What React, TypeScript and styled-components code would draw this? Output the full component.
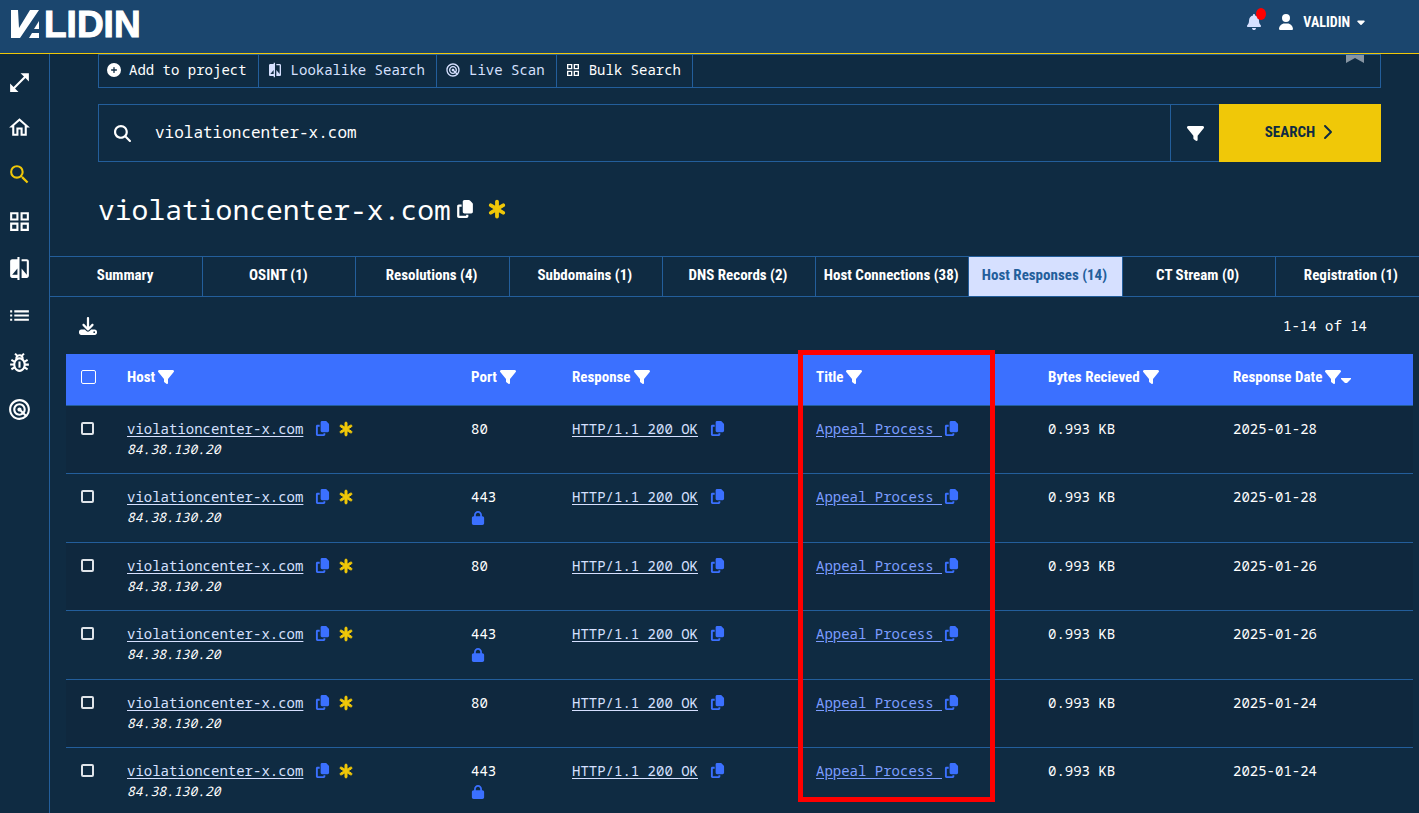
import React from "react";
import styled, { createGlobalStyle, css } from "styled-components";
import {
  MdCompare,
  MdList,
  MdOpenInFull,
  MdOutlineGridView,
  MdOutlineHome,
  MdOutlinePestControl,
  MdRadar,
  MdSearch,
} from "react-icons/md";
import {
  FaAsterisk,
  FaBell,
  FaCaretDown,
  FaChevronRight,
  FaCirclePlus,
  FaCopy,
  FaDownload,
  FaFilter,
  FaLock,
  FaMagnifyingGlass,
  FaUser,
} from "react-icons/fa6";

const color = {
  page: "#0f2b42",
  stripe: "#0f283e",
  header: "#1b466e",
  line: "#235e9b",
  yellow: "#f0c808",
  blue: "#3b70ff",
  pale: "#d6e0ff",
  link: "#7c9dff",
  white: "#ffffff",
};
const mono = `"Noto Sans Mono", "DejaVu Sans Mono", monospace`;
const condensed = `"Roboto Condensed", "Open Sans Condensed", sans-serif`;

const GlobalStyle = createGlobalStyle`
  *, *::before, *::after { box-sizing: border-box; }
  body {
    margin: 0;
    overflow: hidden;
    background: ${color.page};
    color: ${color.white};
    font: 400 14px/21px ${mono};
  }
  svg { display: block; flex: none; }
`;

const Page = styled.div`
  display: flex;
  flex-direction: column;
  height: 100vh;
`;

const TopBar = styled.header`
  display: flex;
  align-items: flex-start;
  justify-content: space-between;
  flex: 0 0 54px;
  padding: 4px 52px 0 11px;
  background: ${color.header};
  border-bottom: 1px solid ${color.yellow};
`;

const LogoLink = styled.a`
  color: ${color.white};
`;

const Account = styled.div`
  display: flex;
  align-items: center;
  height: 36px;
`;

const IconButton = styled.button`
  display: flex;
  align-items: center;
  justify-content: center;
  padding: 0;
  border: 0;
  background: none;
  color: inherit;
  cursor: pointer;
`;

const BellButton = styled(IconButton)`
  position: relative;
  margin-right: 16px;
  color: ${color.pale};
`;

const Alert = styled.span`
  position: absolute;
  top: -6px;
  right: -4px;
  width: 10px;
  height: 12px;
  border-radius: 50%;
  background: #ff0000;
`;

const UserButton = styled(IconButton)`
  gap: 5px;
  font: 700 14px/24px ${condensed};
`;

const UserName = styled.span`
  padding-left: 4px;
`;

const Body = styled.div`
  display: flex;
  flex: 1;
  min-height: 0;
`;

const Sidebar = styled.nav`
  flex: 0 0 50px;
  border-right: 1px solid ${color.line};
`;

const ExpandButton = styled(IconButton)`
  width: 39px;
  height: 50px;
  padding-top: 6px;
`;

const NavLink = styled.a<{ $active?: boolean }>`
  display: flex;
  align-items: center;
  justify-content: center;
  width: 39px;
  height: 47px;
  color: ${(p) => (p.$active ? color.yellow : color.white)};
`;

const Main = styled.main`
  flex: 1;
  min-width: 0;
  overflow: hidden;
`;

const Intro = styled.section`
  display: flex;
  flex-direction: column;
  padding: 0 38px 0 48px;
`;

const Toolbar = styled.div`
  display: flex;
  height: 34px;
  margin-bottom: 16px;
  border: 1px solid ${color.line};
`;

const Tool = styled.button<{ $muted?: boolean }>`
  display: flex;
  align-items: center;
  gap: 8px;
  padding: 0 11px 2px 8px;
  border: 0;
  border-right: 1px solid ${color.line};
  background: none;
  color: ${(p) => (p.$muted ? color.pale : color.white)};
  font: 400 14px/20px ${mono};
  cursor: pointer;
`;

const BookmarkButton = styled(IconButton)`
  align-self: flex-start;
  margin-left: auto;
  margin-right: 16px;
  color: #8795a3;
`;

const SearchForm = styled.form`
  display: flex;
  height: 58px;
`;

const SearchField = styled.label`
  display: flex;
  align-items: center;
  flex: 1;
  gap: 24px;
  padding-left: 15px;
  border: 1px solid ${color.line};
  border-right: 0;
`;

const SearchInput = styled.input`
  flex: 1;
  min-width: 0;
  height: 100%;
  padding: 0 0 2px;
  border: 0;
  outline: 0;
  background: none;
  color: ${color.white};
  font: 400 16px/24px ${mono};
`;

const FilterButton = styled(IconButton)`
  width: 49px;
  border: 1px solid ${color.line};
  border-right: 0;
`;

const SearchButton = styled(IconButton)`
  gap: 4px;
  width: 162px;
  padding-bottom: 3px;
  background: ${color.yellow};
  color: ${color.page};
  font: 700 15px/24px ${condensed};
`;

const Heading = styled.div`
  display: flex;
  align-items: center;
  gap: 13px;
  height: 94px;
`;

const Title = styled.h1`
  display: flex;
  align-items: center;
  gap: 5px;
  margin: 0;
  font: 400 28px/40px ${mono};
`;

const Star = styled(FaAsterisk)`
  color: ${color.yellow};
  stroke: ${color.yellow};
  stroke-width: 32px;
  overflow: visible;
`;

const Tabs = styled.div`
  display: flex;
  height: 41px;
  margin-right: -10px;
  border: solid ${color.line};
  border-width: 1px 0;
`;

const Tab = styled.button<{ $active?: boolean }>`
  flex: 1 1 0;
  min-width: 0;
  padding: 0 2px 3px 0;
  border: 0;
  border-right: 1px solid ${color.line};
  background: ${(p) => (p.$active ? color.pale : "transparent")};
  color: ${(p) => (p.$active ? color.line : color.white)};
  font: 700 15px/20px ${condensed};
  white-space: nowrap;
  cursor: pointer;
`;

const TableBar = styled.div`
  display: flex;
  align-items: center;
  justify-content: space-between;
  height: 57px;
  padding: 0 52px 0 29px;
`;

const TableArea = styled.div`
  padding: 0 6px 0 16px;
`;

const Table = styled.table`
  width: 100%;
  table-layout: fixed;
  border-collapse: separate;
  border-spacing: 0;
`;

const Col = styled.col<{ $width: number }>`
  width: ${(p) => p.$width}px;
`;

const cell = css`
  padding: 0 0 0 18px;
  border-bottom: 1px solid ${color.line};
  text-align: left;
  &:first-child { padding-left: 15px; }
`;

const HeadCell = styled.th`
  ${cell}
  position: relative;
  height: 52px;
  padding-bottom: 5px;
  background: ${color.blue};
  font: 700 15px/20px ${condensed};
`;

const HeadLabel = styled.div`
  display: flex;
  align-items: center;
  gap: 3px;
`;

const Row = styled.tr<{ $secure: boolean }>`
  height: ${(p) => (p.$secure ? 69 : 68)}px;
  &:nth-child(odd) { background: ${color.stripe}; }
`;

const Cell = styled.td`
  ${cell}
  padding-top: 12px;
  vertical-align: top;
`;

const Check = styled.input`
  display: block;
  appearance: none;
  width: 13px;
  height: 13px;
  margin: 4px 0 0;
  border: 2px solid #dfe4e9;
  border-radius: 2px;
`;

const HeadCheck = styled(Check)`
  width: 15px;
  height: 14px;
  margin: 0;
  border-width: 1px;
  border-color: ${color.white};
`;

const Line = styled.div`
  display: flex;
  align-items: center;
  height: 21px;
`;

const CopyButton = styled(IconButton)`
  margin: 0 8px 0 12px;
  color: ${color.blue};
`;

const TextLink = styled.a`
  color: ${color.pale};
  white-space: pre;
  text-underline-offset: 2px;
`;

const TitleLink = styled(TextLink)`
  color: ${color.link};
`;

const TitleCopy = styled(CopyButton)`
  margin: 0 0 0 2px;
`;

const Address = styled.em`
  display: block;
  font-size: 13px;
  line-height: 21px;
`;

const LockMark = styled.span`
  display: block;
  padding-top: 4px;
  color: ${color.blue};
`;

const Highlight = styled.span`
  position: absolute;
  top: -4px;
  left: 0;
  right: 35px;
  height: 452px;
  border: 5px solid #ff0000;
  pointer-events: none;
  z-index: 1;
`;

const LogoText = styled.text`
  font: 700 37px "Liberation Sans", Arial, sans-serif;
  stroke: currentColor;
  stroke-width: 1px;
`;

function Logo() {
  return (
    <svg width="136" height="44" viewBox="0 -6 136 44" fill="currentColor" role="img" aria-label="Validin">
      <path d="M0 0H7L8 18L19 0H28L9 28H0Z" />
      <path d="M28 11V19H23ZM21 23H28V28H18Z" />
      <LogoText x="33" y="27">LIDIN</LogoText>
    </svg>
  );
}

const navItems = [
  { label: "Home", Icon: MdOutlineHome },
  { label: "Search", Icon: MdSearch, active: true },
  { label: "Bulk search", Icon: MdOutlineGridView },
  { label: "Lookalikes", Icon: MdCompare },
  { label: "Lists", Icon: MdList },
  { label: "Threats", Icon: MdOutlinePestControl },
  { label: "Live scan", Icon: MdRadar },
];

const tabs = [
  "Summary",
  "OSINT (1)",
  "Resolutions (4)",
  "Subdomains (1)",
  "DNS Records (2)",
  "Host Connections (38)",
  "Host Responses (14)",
  "CT Stream (0)",
  "Registration (1)",
];

const columns = ["Host", "Port", "Response", "Title", "Bytes Recieved", "Response Date"];
const widths = [43, 344, 101, 244, 232, 185, 198];

const rows = [
  { port: 80, date: "2025-01-28" },
  { port: 443, date: "2025-01-28" },
  { port: 80, date: "2025-01-26" },
  { port: 443, date: "2025-01-26" },
  { port: 80, date: "2025-01-24" },
  { port: 443, date: "2025-01-24" },
];

export default function App() {
  return (
    <Page>
      <GlobalStyle />
      <TopBar>
        <LogoLink href="#"><Logo /></LogoLink>
        <Account>
          <BellButton aria-label="Notifications"><FaBell size={16} /><Alert /></BellButton>
          <UserButton>
            <FaUser size={16} />
            <UserName>VALIDIN</UserName>
            <FaCaretDown size={12} />
          </UserButton>
        </Account>
      </TopBar>
      <Body>
        <Sidebar aria-label="Main">
          <ExpandButton aria-label="Expand menu"><MdOpenInFull size={25} /></ExpandButton>
          {navItems.map(({ label, Icon, active }) => (
            <NavLink key={label} href="#" aria-label={label} $active={active}><Icon size={25} /></NavLink>
          ))}
        </Sidebar>
        <Main>
          <Intro>
            <Toolbar>
              <Tool><FaCirclePlus size={14} />Add to project</Tool>
              <Tool $muted><MdCompare size={16} />Lookalike Search</Tool>
              <Tool $muted><MdRadar size={16} />Live Scan</Tool>
              <Tool><MdOutlineGridView size={16} />Bulk Search</Tool>
              <BookmarkButton aria-label="Bookmark">
                <svg width="18" height="8" viewBox="0 0 18 8" fill="currentColor"><path d="M0 0H18V8L9 3L0 8Z" /></svg>
              </BookmarkButton>
            </Toolbar>
            <SearchForm onSubmit={(e) => e.preventDefault()}>
              <SearchField>
                <FaMagnifyingGlass size={17} />
                <SearchInput aria-label="Search" defaultValue="violationcenter-x.com" />
              </SearchField>
              <FilterButton type="button" aria-label="Filter"><FaFilter size={17} /></FilterButton>
              <SearchButton type="submit">SEARCH<FaChevronRight size={16} /></SearchButton>
            </SearchForm>
            <Heading>
              <Title>
                violationcenter-x.com
                <IconButton aria-label="Copy domain"><FaCopy size={18} /></IconButton>
              </Title>
              <Star size={20} />
            </Heading>
          </Intro>
          <Tabs role="tablist">
            {tabs.map((name) => {
              const active = name.startsWith("Host Responses");
              return <Tab key={name} role="tab" aria-selected={active} $active={active}>{name}</Tab>;
            })}
          </Tabs>
          <TableBar>
            <IconButton aria-label="Download"><FaDownload size={18} /></IconButton>
            <span>1-14 of 14</span>
          </TableBar>
          <TableArea>
            <Table>
              <colgroup>{widths.map((w, i) => <Col key={i} $width={w} />)}</colgroup>
              <thead>
                <tr>
                  <HeadCell><HeadCheck type="checkbox" aria-label="Select all" /></HeadCell>
                  {columns.map((name) => (
                    <HeadCell key={name}>
                      <HeadLabel>
                        {name}
                        <IconButton aria-label={`Filter ${name}`}>
                          <FaFilter size={16} />
                          {name === "Response Date" && (
                            <svg width="10" height="16" viewBox="0 0 10 16" fill="currentColor"><path d="M0 9H10V10L6 14H4L0 10Z" /></svg>
                          )}
                        </IconButton>
                      </HeadLabel>
                      {name === "Title" && <Highlight />}
                    </HeadCell>
                  ))}
                </tr>
              </thead>
              <tbody>
                {rows.map(({ port, date }, i) => (
                  <Row key={i} $secure={port === 443}>
                    <Cell><Check type="checkbox" aria-label={`Select row ${i + 1}`} /></Cell>
                    <Cell>
                      <Line>
                        <TextLink href="#">violationcenter-x.com</TextLink>
                        <CopyButton aria-label="Copy host"><FaCopy size={15} /></CopyButton>
                        <Star size={16} />
                      </Line>
                      <Address>84.38.130.20</Address>
                    </Cell>
                    <Cell>
                      {port}
                      {port === 443 && <LockMark><FaLock size={14} /></LockMark>}
                    </Cell>
                    <Cell>
                      <Line>
                        <TextLink href="#">HTTP/1.1 200 OK</TextLink>
                        <CopyButton aria-label="Copy response"><FaCopy size={15} /></CopyButton>
                      </Line>
                    </Cell>
                    <Cell>
                      <Line>
                        <TitleLink href="#">{"Appeal Process "}</TitleLink>
                        <TitleCopy aria-label="Copy title"><FaCopy size={15} /></TitleCopy>
                      </Line>
                    </Cell>
                    <Cell>0.993 KB</Cell>
                    <Cell>{date}</Cell>
                  </Row>
                ))}
              </tbody>
            </Table>
          </TableArea>
        </Main>
      </Body>
    </Page>
  );
}
